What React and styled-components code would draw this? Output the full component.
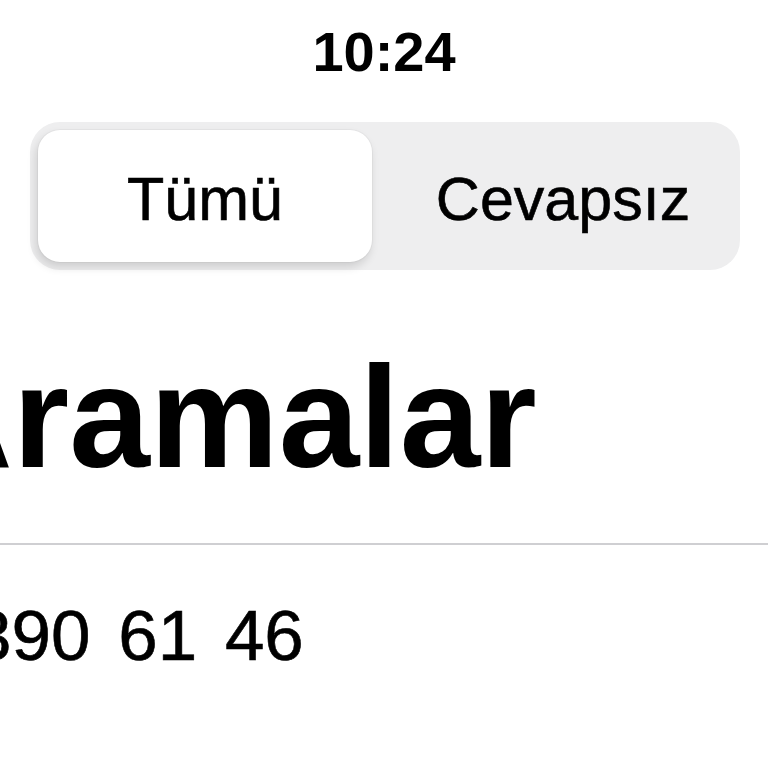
import React from "react";
import styled, { createGlobalStyle } from "styled-components";

const GlobalStyle = createGlobalStyle`
  html, body {
    margin: 0;
    padding: 0;
    background: #ffffff;
  }
  body {
    font-family: "Liberation Sans", Arial, sans-serif;
    color: #000000;
  }
`;

const Screen = styled.div`
  width: 768px;
  height: 768px;
  overflow: hidden;
  background: #ffffff;
  display: flex;
  flex-direction: column;
`;

const StatusBar = styled.div`
  padding-top: 24px;
  height: 122px;
  box-sizing: border-box;
  display: flex;
  justify-content: center;
  font-size: 56px;
  line-height: 1;
  font-weight: 700;
`;

const Segmented = styled.div`
  margin-left: 30px;
  width: 710px;
  height: 148px;
  box-sizing: border-box;
  padding: 8px;
  border-radius: 30px;
  background: #eeeeef;
  display: grid;
  grid-template-columns: 334px 1fr;
`;

const Segment = styled.div`
  display: flex;
  align-items: center;
  justify-content: center;
  padding-top: 6px;
  padding-left: ${(p) => (p.selected ? "0" : "22px")};
  font-size: 61px;
  line-height: 1;
  border-radius: 22px;
  background: ${(p) => (p.selected ? "#ffffff" : "transparent")};
  box-shadow: ${(p) =>
    p.selected
      ? "-2px 5px 10px rgba(0, 0, 0, 0.14), 0 0 0 1px rgba(0, 0, 0, 0.03)"
      : "none"};
  -webkit-text-stroke: 0.6px #000;
`;

const Title = styled.h1`
  margin: 75px 0 0 -92px;
  font-size: 145px;
  line-height: 1;
  font-weight: 700;
  white-space: nowrap;
`;

const Divider = styled.div`
  margin-top: 53px;
  height: 2px;
  background: #cfcfd2;
`;

const Number = styled.div`
  margin: 55px 0 0 -28px;
  font-size: 71px;
  line-height: 1;
  word-spacing: 8px;
  white-space: nowrap;
  -webkit-text-stroke: 0.6px #000;
`;

export default function App() {
  return (
    <>
      <GlobalStyle />
      <Screen>
        <StatusBar>10:24</StatusBar>
        <Segmented>
          <Segment selected>Tümü</Segment>
          <Segment>Cevapsız</Segment>
        </Segmented>
        <Title>Aramalar</Title>
        <Divider />
        <Number>390 61 46</Number>
      </Screen>
    </>
  );
}
